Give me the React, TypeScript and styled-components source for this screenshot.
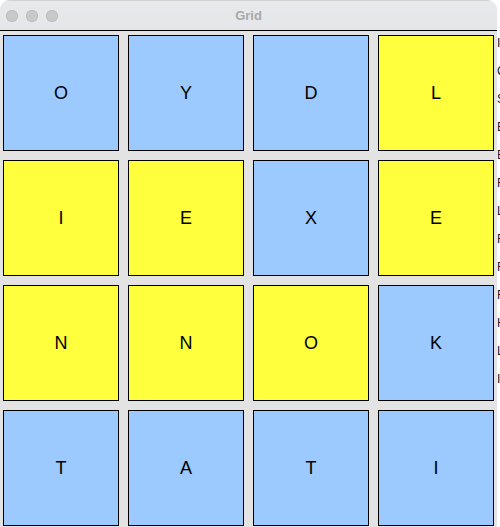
import React from "react";
import styled, { createGlobalStyle } from "styled-components";

const Global = createGlobalStyle`
  html, body { margin: 0; padding: 0; background: #ffffff; overflow: hidden; }
  #root { width: 500px; height: 527px; }
`;

const Page = styled.div`
  display: flex;
  width: 500px;
  height: 527px;
  overflow: hidden;
`;

const Window = styled.div`
  width: 497px;
  flex: none;
  display: flex;
  flex-direction: column;
  border-top-right-radius: 10px;
  border-top-left-radius: 10px;
  overflow: hidden;
  background: #e3e3e3;
`;

const TitleBar = styled.div`
  height: 31px;
  flex: none;
  display: flex;
  align-items: center;
  position: relative;
  background: linear-gradient(#e8e9eb, #e4e6e9);
  border-top: 1px solid #d2d2d2;
  border-bottom: 1px solid #000;
  box-sizing: border-box;
`;

const Lights = styled.div`
  display: flex;
  gap: 8px;
  padding-left: 6px;
  padding-top: 1px;
`;

const Light = styled.span`
  width: 12px;
  height: 12px;
  border-radius: 50%;
  background: #c7c8ca;
  box-shadow: inset 0 0 0 0.5px #b4b5b7;
`;

const Title = styled.div`
  position: absolute;
  left: 0;
  right: 0;
  top: 7px;
  text-align: center;
  font-family: "Liberation Sans", Arial, sans-serif;
  font-weight: bold;
  font-size: 13px;
  color: #a9a9aa;
`;

const Grid = styled.div`
  display: grid;
  grid-template-columns: repeat(4, 116px);
  grid-auto-rows: 116px;
  gap: 9px;
  padding: 4px 0 0 3px;
`;

const Cell = styled.div<{ $yellow?: boolean }>`
  box-sizing: border-box;
  border: 1.5px solid #000;
  background: ${(p) => (p.$yellow ? "#ffff3d" : "#9dcafe")};
  display: flex;
  align-items: center;
  justify-content: center;
  font-family: "Liberation Sans", Arial, sans-serif;
  font-size: 18px;
  color: #000;
`;

const Behind = styled.div`
  flex: 1;
  overflow: hidden;
  display: flex;
  flex-direction: column;
  padding-top: 36px;
  gap: 14px;
  font-family: "Liberation Sans", Arial, sans-serif;
  font-size: 12px;
  color: #111;
  white-space: nowrap;
`;

const cells: [string, boolean][] = [
  ["O", false], ["Y", false], ["D", false], ["L", true],
  ["I", true], ["E", true], ["X", false], ["E", true],
  ["N", true], ["N", true], ["O", true], ["K", false],
  ["T", false], ["A", false], ["T", false], ["I", false],
];

const behindLines = [
  "Import", "Class", "Stream", "Build", "Edit", "Run", "Look",
  "Find", "Read", "Run", "Hide", "Line", "Item",
];

export default function App() {
  return (
    <>
      <Global />
      <Page>
        <Window>
          <TitleBar>
            <Lights>
              <Light />
              <Light />
              <Light />
            </Lights>
            <Title>Grid</Title>
          </TitleBar>
          <Grid>
            {cells.map(([ch, y], i) => (
              <Cell key={i} $yellow={y}>
                {ch}
              </Cell>
            ))}
          </Grid>
        </Window>
        <Behind>
          {behindLines.map((t, i) => (
            <span key={i}>{t}</span>
          ))}
        </Behind>
      </Page>
    </>
  );
}
